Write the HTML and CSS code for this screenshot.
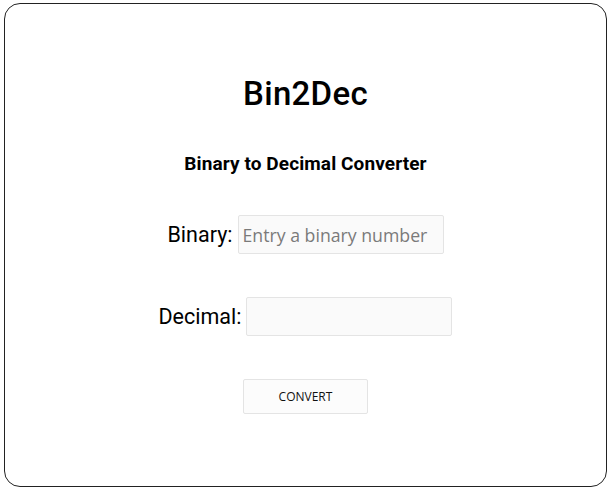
FILE: index.html
```html
<!DOCTYPE html>
<html>
<head>
<meta charset="utf-8">
<link rel="stylesheet" href="styles.css">
</head>
<body>
<main class="card">
  <h1 class="title">Bin2Dec</h1>
  <h2 class="subtitle">Binary to Decimal Converter</h2>
  <div class="row row-binary">
    <label class="label" for="bin">Binary:</label>
    <input class="field" id="bin" type="text" placeholder="Entry a binary number">
  </div>
  <div class="row row-decimal">
    <label class="label" for="dec">Decimal:</label>
    <input class="field" id="dec" type="text">
  </div>
  <button class="btn" type="button">CONVERT</button>
</main>
</body>
</html>
```
FILE: styles.css
```css
html, body {
  margin: 0;
  padding: 0;
  background: #fff;
}
body {
  padding: 3px 0 0 4px;
}
.card {
  box-sizing: border-box;
  width: 603px;
  height: 484px;
  border: 1px solid #222;
  border-radius: 16px;
  display: flex;
  flex-direction: column;
  align-items: center;
  font-family: Roboto, "Liberation Sans", sans-serif;
  color: #000;
}
.title {
  margin: 71px 0 0;
  font-size: 33px;
  font-weight: 500;
  line-height: 38px;
  letter-spacing: 0.3px;
}
.subtitle {
  margin: 40px 0 0;
  font-size: 19px;
  font-weight: 700;
  line-height: 22px;
  letter-spacing: 0.1px;
}
.row {
  display: flex;
  align-items: center;
  gap: 5px;
}
.row-binary {
  margin-top: 40px;
}
.row-decimal {
  margin-top: 43px;
}
.label {
  font-size: 21.5px;
  line-height: 24px;
}
.field {
  box-sizing: border-box;
  width: 206px;
  height: 39px;
  margin: 0;
  padding: 0 4px;
  border: 1px solid #e4e4e4;
  border-radius: 2px;
  background: #fafafa;
  font-family: "Open Sans", sans-serif;
  font-size: 17.7px;
  color: #333;
  outline: none;
}
.field::placeholder {
  color: #7a7a7a;
}
.btn {
  box-sizing: border-box;
  margin-top: 43px;
  width: 125px;
  height: 35px;
  border: 1px solid #e4e4e4;
  border-radius: 2px;
  background: #fcfcfc;
  font-family: "Open Sans", sans-serif;
  font-size: 12px;
  color: #111;
  padding: 0;
}
```
